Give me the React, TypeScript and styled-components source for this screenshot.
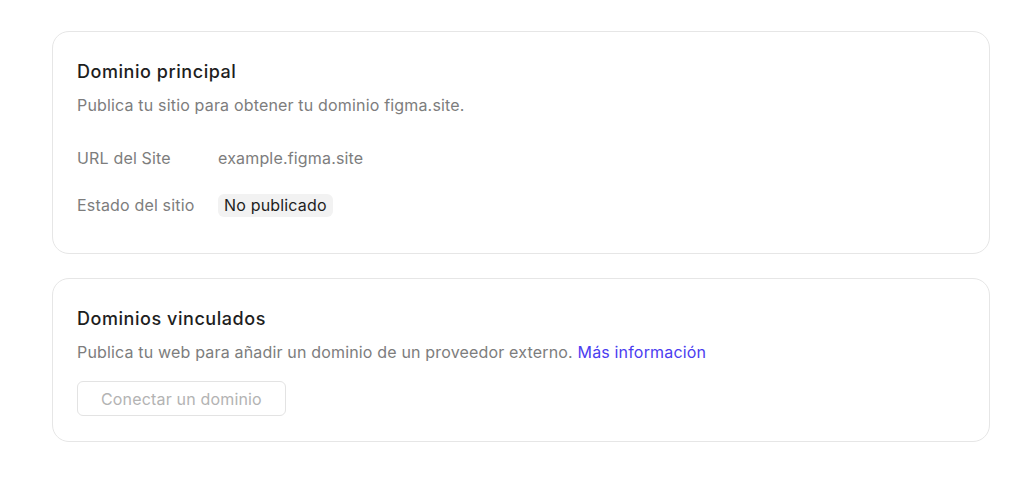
import React from 'react';
import styled, { createGlobalStyle } from 'styled-components';

const GlobalStyle = createGlobalStyle`
  html, body {
    margin: 0;
    padding: 0;
    background: #ffffff;
    font-family: Inter, "Noto Sans", "Liberation Sans", sans-serif;
    -webkit-font-smoothing: antialiased;
  }
`;

const App = () => {
  return (
    <>
      <GlobalStyle />
      <Page>
        <Card $top={28} $bottom={36}>
          <CardTitle>Dominio principal</CardTitle>
          <CardText>Publica tu sitio para obtener tu dominio figma.site.</CardText>
          <InfoList>
            <InfoRow>
              <InfoLabel>URL del Site</InfoLabel>
              <InfoValue>example.figma.site</InfoValue>
            </InfoRow>
            <InfoRow>
              <InfoLabel>Estado del sitio</InfoLabel>
              <Badge>No publicado</Badge>
            </InfoRow>
          </InfoList>
        </Card>

        <Card $top={28} $bottom={25}>
          <CardTitle>Dominios vinculados</CardTitle>
          <CardText>
            Publica tu web para añadir un dominio de un proveedor externo.{' '}
            <MoreLink href="#">Más información</MoreLink>
          </CardText>
          <ConnectButton disabled>Conectar un dominio</ConnectButton>
        </Card>
      </Page>
    </>
  );
};

const Page = styled.main`
  display: flex;
  flex-direction: column;
  gap: 24px;
  width: 938px;
  padding: 31px 0 0 52px;
`;

const Card = styled.section<{ $top: number; $bottom: number }>`
  display: flex;
  flex-direction: column;
  border: 1px solid #e6e6e6;
  border-radius: 17px;
  padding: ${(p) => p.$top}px 24px ${(p) => p.$bottom}px;
  letter-spacing: 0.17px;
`;

const CardTitle = styled.h2`
  margin: 0;
  font-size: 18px;
  line-height: 24px;
  font-weight: 500;
  color: #1e1e1e;
  letter-spacing: 0.55px;
`;

const CardText = styled.p`
  margin: 10px 0 0;
  font-size: 16px;
  line-height: 22px;
  color: #7d7d7d;
`;

const MoreLink = styled.a`
  color: #4b3df0;
  text-decoration: none;

  &:hover {
    text-decoration: underline;
  }
`;

const InfoList = styled.div`
  display: flex;
  flex-direction: column;
  gap: 23px;
  margin-top: 30px;
`;

const InfoRow = styled.div`
  display: grid;
  grid-template-columns: 141px 1fr;
  align-items: center;
  min-height: 24px;
  font-size: 16px;
`;

const InfoLabel = styled.span`
  color: #7d7d7d;
`;

const InfoValue = styled.span`
  color: #7d7d7d;
`;

const Badge = styled.span`
  justify-self: start;
  padding: 1px 6px;
  border-radius: 6px;
  background: #f2f2f2;
  color: #1e1e1e;
  line-height: 21px;
  font-size: 16px;
`;

const ConnectButton = styled.button`
  align-self: flex-start;
  margin-top: 18px;
  height: 35px;
  padding: 0 23px;
  border: 1px solid #e3e3e3;
  border-radius: 6px;
  background: #ffffff;
  color: #b3b3b3;
  font-family: inherit;
  font-size: 16px;
  letter-spacing: inherit;
  cursor: default;
`;

export default App;
